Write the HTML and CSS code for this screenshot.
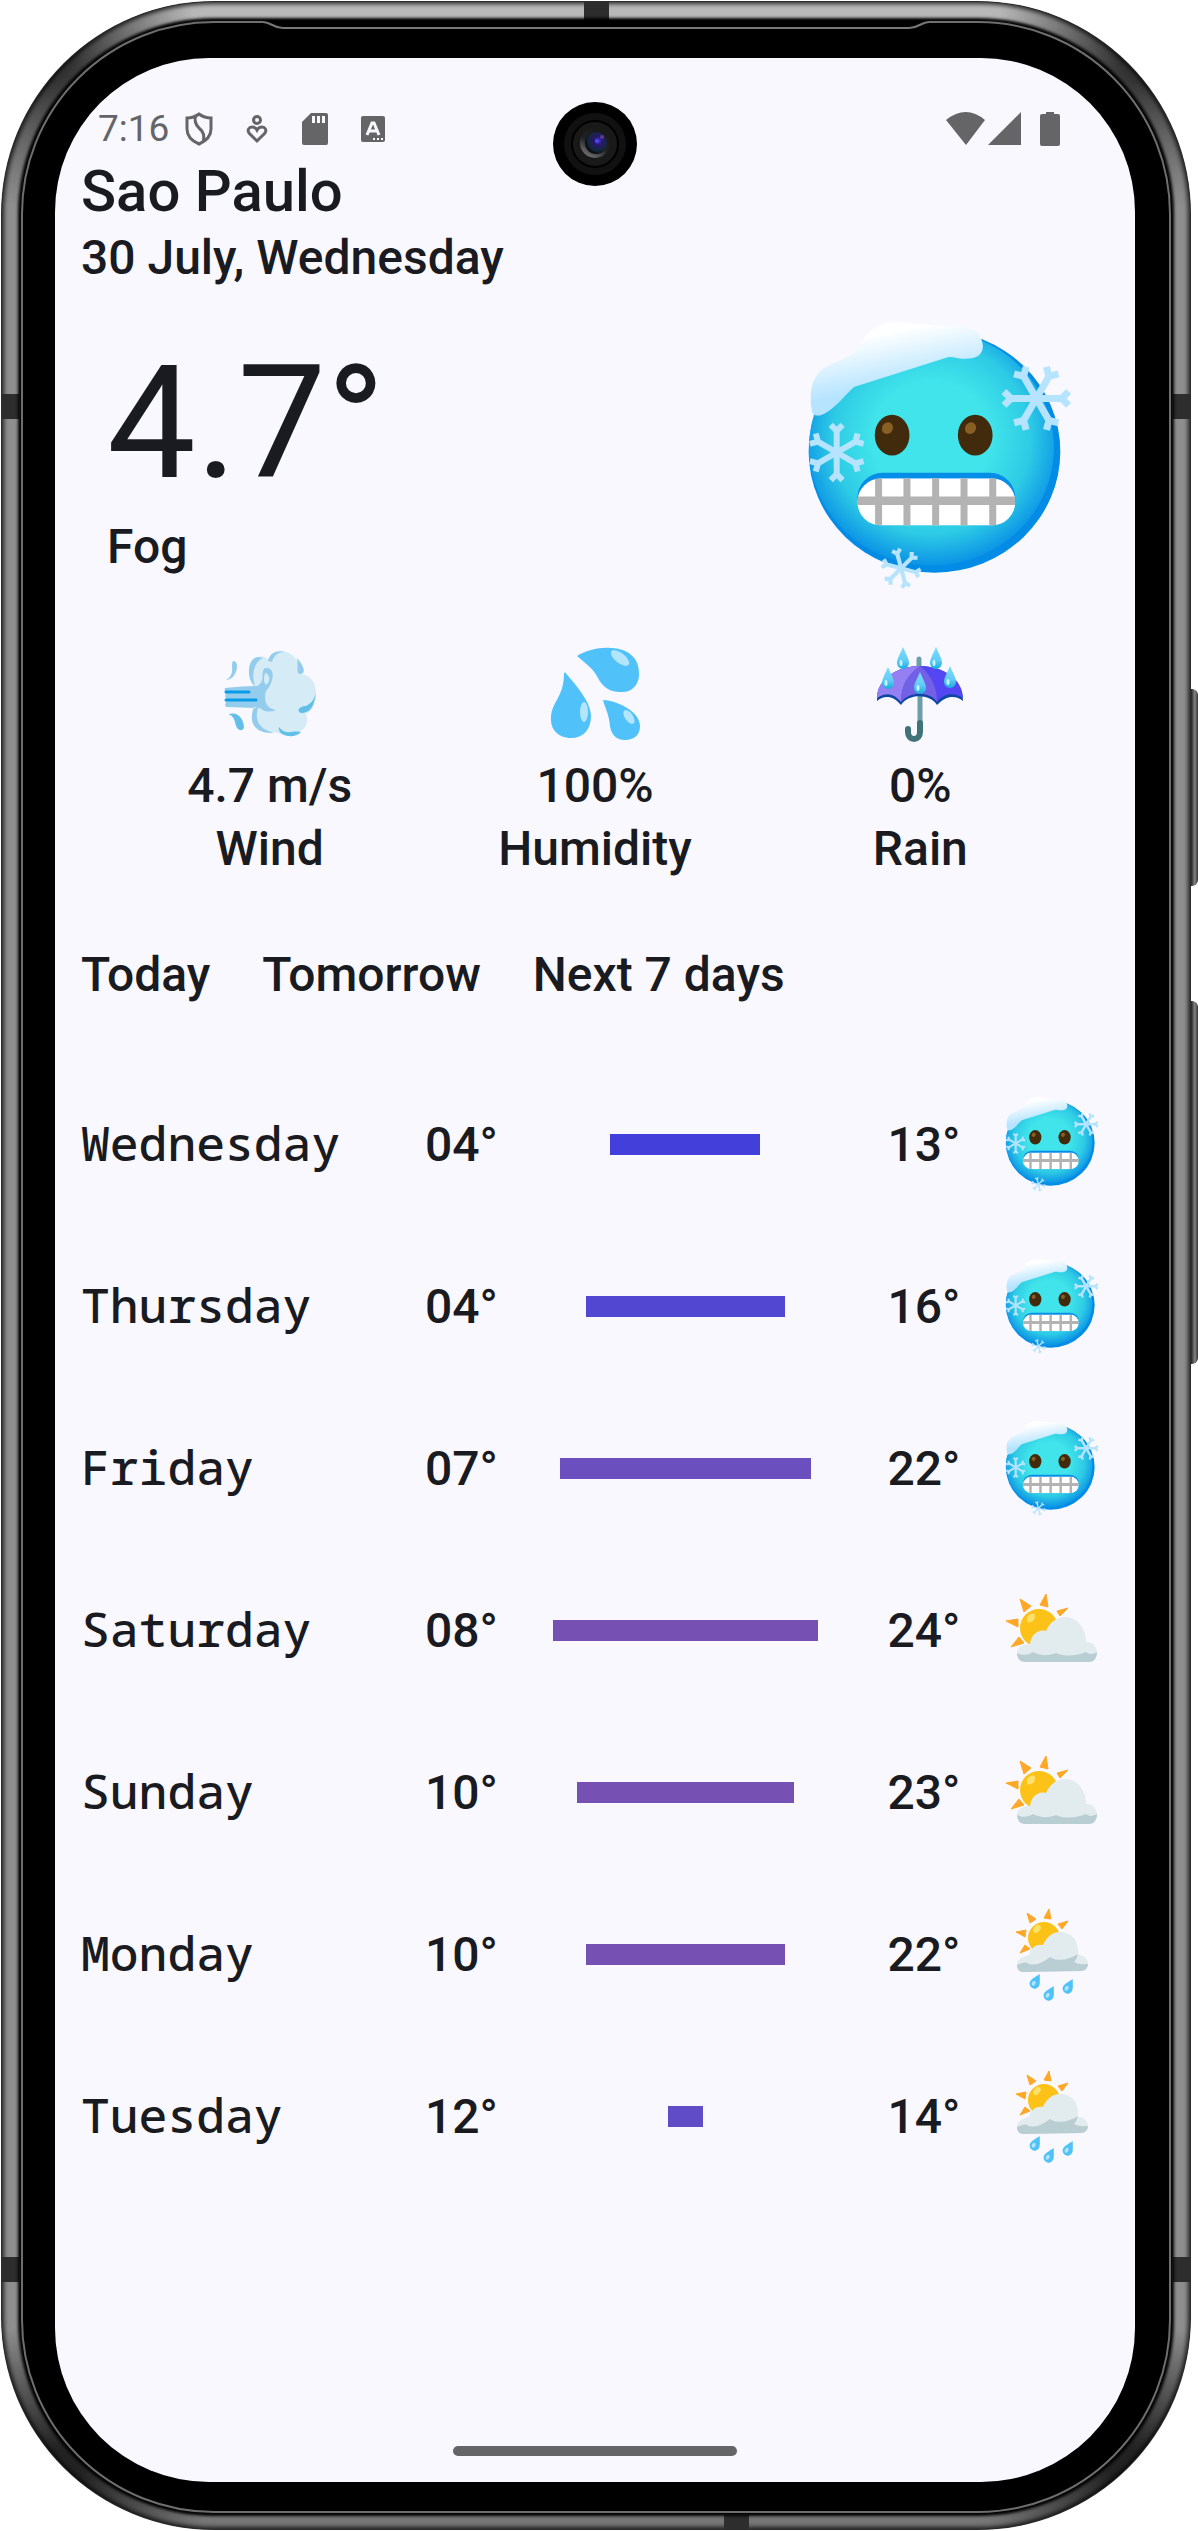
FILE: index.html
```html
<!DOCTYPE html>
<html lang="en">
<head>
<meta charset="utf-8">
<meta name="viewport" content="width=device-width, initial-scale=1">
<title>Weather – Sao Paulo</title>
<link rel="stylesheet" href="styles.css">
</head>
<body>
<svg class="sprite" aria-hidden="true">
  <defs>
    <radialGradient id="ice" cx="0.5" cy="0.46" r="0.54">
      <stop offset="0.45" stop-color="#40e4ea"/>
      <stop offset="0.75" stop-color="#2ecbe5"/>
      <stop offset="1" stop-color="#0b93e6"/>
    </radialGradient>
    <linearGradient id="snow" x1="0.3" y1="0.1" x2="0.5" y2="0.68">
      <stop offset="0.1" stop-color="#fff"/>
      <stop offset="1" stop-color="#b6e4ff"/>
    </linearGradient>
    <linearGradient id="rain" x1="0" y1="0" x2="0" y2="1">
      <stop offset="0" stop-color="#7ddcff"/>
      <stop offset="0.6" stop-color="#62ccf5"/>
      <stop offset="1" stop-color="#16afdb"/>
    </linearGradient>
    <clipPath id="teeth"><rect x="232" y="535" width="473" height="142" rx="72"/></clipPath>
    <g id="arm"><path d="M0 0H84M102-22L80 0L102 22"/></g>
    <g id="flake" fill="none" stroke="#b6e4ff" stroke-width="22" stroke-linejoin="round">
      <use href="#arm"/><use href="#arm" transform="rotate(60)"/><use href="#arm" transform="rotate(120)"/>
      <use href="#arm" transform="rotate(180)"/><use href="#arm" transform="rotate(240)"/><use href="#arm" transform="rotate(300)"/>
    </g>
    <g id="raindrop">
      <path d="M0-11C3-4 6 1 6 5A6 6 0 0 1-6 5C-6 1-3-4 0-11Z" fill="url(#rain)"/>
      <ellipse cx="-2" cy="5" rx="1.500" ry="3" fill="#c9f2ff"/>
    </g>
    <g id="drip" transform="rotate(28)">
      <path d="M0-8C2-4 5 0 5 3A5 5 0 0 1-5 3C-5 0-2-4 0-8Z" fill="#4fc3f7"/>
      <ellipse cx="-1" cy="3" rx="1.800" ry="2.600" fill="#b3e5fc"/>
    </g>
  </defs>
  <symbol id="cold" viewBox="84 64 788 806">
    <ellipse cx="463" cy="455" rx="377" ry="363" fill="#028ce6"/>
    <ellipse cx="454" cy="444" rx="367" ry="353" fill="url(#ice)"/>
    <path d="M95 330C85 250 105 215 160 190C200 175 222 165 240 135C265 90 300 65 350 66C400 70 430 78 490 78L540 78C580 83 605 103 608 138C608 165 590 177 555 177C535 178 525 172 505 172L222 262C190 290 160 335 120 347C103 348 96 345 95 330Z" fill="url(#snow)"/>
    <g fill="#422b0d"><ellipse cx="336" cy="406" rx="52" ry="61"/><ellipse cx="585" cy="406" rx="52" ry="61"/></g>
    <g fill="#896024"><ellipse cx="322" cy="385" rx="16" ry="18" transform="rotate(35 322 385)"/><ellipse cx="571" cy="385" rx="16" ry="18" transform="rotate(35 571 385)"/></g>
    <rect x="232" y="519" width="473" height="150" rx="75" fill="#058de8"/>
    <g clip-path="url(#teeth)">
      <path d="M232 535H705V677H232Z" fill="#fff"/>
      <path d="M285 535h21v142h-21zM370 535h21v142h-21zM456 535h21v142h-21zM541 535h21v142h-21zM627 535h21v142h-21zM232 590h473v25h-473z" fill="#b3b3b3"/>
    </g>
    <use href="#flake" transform="translate(768 296) scale(.95)"/>
    <use href="#flake" transform="translate(170 458) rotate(30) scale(.81)"/>
    <use href="#flake" transform="translate(363 805) rotate(15) scale(.56)"/>
  </symbol>
  <symbol id="partly" viewBox="0 0 94 95">
    <g fill="#ffa726" stroke="#ffa726" stroke-linejoin="round"><path d="M1 38L13 36L13 44ZM15 16L26 23L19 29ZM41 11L43 24L35 22ZM63 25L52 28L55 33ZM6 64L14 54L19 60Z"/></g>
    <circle cx="34" cy="45" r="19" fill="#fdc218"/>
    <ellipse cx="26" cy="35" rx="3.500" ry="5" transform="rotate(38 26 35)" fill="#fee16b"/>
    <path d="M12 70C12 64 18 61 25 61C26 52 33 46 41 48C45 39 52 34 60 34C73 34 81 46 81 59C87 58 92 64 92 69C92 75 89 79 84 79H20C15 79 12 75 12 70Z" fill="#e2ebee"/>
    <path d="M12 70C17 73 24 72 28 69C35 73 44 73 51 70C60 74 72 73 81 69C84 72 89 71 92 69C92 75 89 79 84 79H20C15 79 12 75 12 70Z" fill="#b9ced3"/>
  </symbol>
  <symbol id="showers" viewBox="0 0 94 95">
    <g fill="#ffa726" stroke="#ffa726" stroke-linejoin="round"><path d="M11 25L21 23L20 30ZM22 6L31 12L25 16ZM44 2L46 12L39 11ZM63 14L53 17L57 22ZM15 46L20 38L25 42Z"/></g>
    <circle cx="39" cy="31" r="16" fill="#fdc218"/>
    <ellipse cx="32" cy="22" rx="3" ry="4.500" transform="rotate(38 32 22)" fill="#fee16b"/>
    <path d="M12 58C12 52 18 49 24 48C26 40 32 37 38 38C42 29 48 25 55 25C67 25 74 34 73 48C79 48 83 52 83 57C83 61 80 64 76 64L18 65C14 65 12 62 12 58Z" fill="#e2ebee"/>
    <path d="M12 58C17 56 20 54 24 57C32 59 38 55 45 50C52 55 64 53 73 47C72 51 70 54 69 55C74 58 79 57 83 57C83 61 80 64 76 64L18 65C14 65 12 62 12 58Z" fill="#b9ced3"/>
    <use href="#drip" transform="translate(31 74)"/><use href="#drip" transform="translate(45 86)"/><use href="#drip" transform="translate(64 79)"/>
  </symbol>
</svg>

<div class="phone">
  <span class="side-key side-key-power"></span>
  <span class="side-key side-key-volume"></span>
  <span class="antenna antenna-top"></span><span class="antenna antenna-bottom"></span>
  <span class="antenna antenna-left-high"></span><span class="antenna antenna-right-high"></span>
  <span class="antenna antenna-left-low"></span><span class="antenna antenna-right-low"></span>
  <div class="bezel">
    <div class="earpiece">
      <svg width="20" height="10" viewBox="0 0 20 10"><path d="M0 0H20V8C10 8 10 2 0 2Z" fill="#000"/><path d="M0 2C8 2 10 8 20 8" fill="none" stroke="#777" stroke-width="2"/></svg>
      <span></span>
      <svg width="20" height="10" viewBox="0 0 20 10"><path d="M0 0H20V2C10 2 10 8 0 8Z" fill="#000"/><path d="M20 2C12 2 10 8 0 8" fill="none" stroke="#777" stroke-width="2"/></svg>
    </div>
    <div class="screen">
      <svg class="camera" viewBox="0 0 84 84" aria-hidden="true">
        <defs>
          <radialGradient id="lens" cx="0.6" cy="0.4" r="0.6"><stop offset="0" stop-color="#3c35c8"/><stop offset="0.35" stop-color="#2a1668"/><stop offset="0.75" stop-color="#13293c"/><stop offset="1" stop-color="#0a0a10"/></radialGradient>
          <linearGradient id="rim" x1="0.7" y1="0.2" x2="0.3" y2="0.9"><stop offset="0" stop-color="#1a1a1a"/><stop offset="0.5" stop-color="#222"/><stop offset="1" stop-color="#666"/></linearGradient>
        </defs>
        <circle cx="42" cy="42" r="42" fill="#000"/><circle cx="42" cy="42" r="31" fill="#111"/>
        <circle cx="42" cy="42" r="23" fill="#191919" stroke="#000" stroke-width="2"/>
        <circle cx="42" cy="41" r="15" fill="url(#rim)"/><circle cx="43" cy="41" r="11" fill="url(#lens)"/>
        <circle cx="44" cy="39" r="2" fill="#4a48f0"/><circle cx="49" cy="35" r="2" fill="#5d3b8c"/>
      </svg>
      <header class="status">
        <time class="clock">7:16</time>
        <div class="notices">
          <svg viewBox="0 0 40 40"><path d="M20 5C16 8 12 9 8 9V20C8 27 13 32 20 35C27 32 32 27 32 20V9C28 9 24 8 20 5ZM17 6C15 11 16 15 20 19C25 23 26 27 24 33" fill="none" stroke="#656567" stroke-width="3"/></svg>
          <svg viewBox="0 0 40 40"><g fill="none" stroke="#656567" stroke-width="3"><circle cx="20" cy="11" r="3.500"/><path d="M20 32L12 24C10 21 12 18 15 18C17 18 19 19 20 21C21 19 23 18 25 18C28 18 30 21 28 24Z"/></g></svg>
          <svg viewBox="0 0 40 40"><path d="M16 4H31Q33 4 33 6V34Q33 36 31 36H9Q7 36 7 34V13Z" fill="#656567"/><path d="M17 7h3v7h-3zM22 7h3v7h-3zM27 7h3v7h-3z" fill="#f9f8ff"/></svg>
          <svg viewBox="0 0 40 40"><rect x="8" y="7" width="24" height="26" rx="2" fill="#656567"/><path d="M14 26L19 14H21L26 26M16 22H24" fill="none" stroke="#f9f8ff" stroke-width="3"/><path d="M20 29h2v2h-2zM24 29h2v2h-2zM28 29h2v2h-2z" fill="#f9f8ff"/></svg>
        </div>
        <svg class="signals" viewBox="0 0 114 40" role="img" aria-label="Wi-Fi, signal and battery"><path d="M0 11Q20-5 39 11L20 36ZM75 3V36H42ZM94 7Q94 5 96 5H100V3H108V5H112Q114 5 114 7V35Q114 37 112 37H96Q94 37 94 35Z" fill="#656567"/></svg>
      </header>

      <main class="weather">
        <h1 class="city">Sao Paulo</h1>
        <p class="date">30 July, Wednesday</p>

        <section class="current">
          <div class="reading">
            <p class="temperature">4.7°</p>
            <p class="condition">Fog</p>
          </div>
          <svg class="mood" role="img" aria-label="Freezing"><use href="#cold"/></svg>
        </section>

        <section class="metrics">
          <div class="metric">
            <svg viewBox="0 0 96 96" aria-hidden="true">
              <path d="M33 41C24 34 25 12 36 11C41 9 46 12 48 16C52 4 66 2 74 13C78 18 79 25 78 28C90 28 95 40 94 50C93 60 90 65 84 68C88 80 80 88 68 87C60 90 54 86 52 86C40 90 28 82 34 60Z" fill="#d5ebf5"/>
              <path d="M3 42Q22 40 35 40C44 36 38 26 43 22C50 21 52 27 50 34Q48 41 44 45C42 52 42 62 54 64Q44 68 38 62L4 61Q2 58 5 55Q2 50 4 48Q2 45 3 42ZM33 40C24 34 25 12 36 11L41 12C30 17 30 32 33 40ZM46 15C48 6 56 4 63 6C56 6 52 9 50 16ZM75 12C82 20 84 27 79 28C73 28 77 20 75 12ZM32 61C26 76 32 88 52 87C38 84 32 74 36 62ZM11 15C18 14 16 33 4 34C14 28 8 20 11 15Z" fill="#93ccec"/>
              <path d="M43 27C48 27 49 36 44 39C41 36 42 30 43 27Z" fill="#d5ebf5"/>
              <path d="M94 47C92 58 90 67 79 67C73 64 79 60 84 60C90 57 92 53 94 47ZM57 81C64 90 70 84 79 86C74 93 55 91 57 81ZM6 68C17 65 22 74 22 82C19 87 14 83 13 76C12 72 10 69 6 68Z" fill="#62bfea"/>
              <path d="M4 46H27M4 54H34" stroke="#089be8" stroke-width="3" stroke-linecap="round"/>
            </svg>
            <p>4.7 m/s</p><p>Wind</p>
          </div>
          <div class="metric">
            <svg viewBox="0 0 96 96" aria-hidden="true">
              <g fill="#50c2f9"><path d="M30 10C40 4 52 1 64 2C84 3 93 14 92 30C91 40 84 47 73 46C62 46 55 40 51 32C46 22 38 17 30 10Z"/><path d="M18 26C24 34 44 54 44 70C44 84 36 92 24 92C11 92 3 83 4 71C5 56 17 50 17 28Z"/><path d="M56 54C72 55 93 66 93 80C93 89 87 94 78 94C68 94 64 87 63 80C62 68 58 62 56 54Z"/></g>
              <g fill="#b3e5fc"><ellipse cx="73" cy="12" rx="5" ry="11" transform="rotate(-52 73 12)"/><ellipse cx="37" cy="66" rx="4" ry="10"/><ellipse cx="82" cy="71" rx="4" ry="8" transform="rotate(-35 82 71)"/></g>
            </svg>
            <p>100%</p><p>Humidity</p>
          </div>
          <div class="metric">
            <svg viewBox="0 0 96 96" aria-hidden="true">
              <path d="M47 13V24M48 48V78" stroke="#6d9fa8" stroke-width="5" stroke-linecap="round"/>
              <path d="M48 77V86A6 7 0 0 1 36 86V83" fill="none" stroke="#407378" stroke-width="6" stroke-linecap="round"/>
              <path d="M5 55C5 34 24 20 48 20S91 34 91 55C84 49 74 49 65 59C59 49 38 46 29 59C21 49 12 49 5 55Z" fill="#0d47a1"/>
              <path d="M5 52C5 34 24 20 48 20S91 34 91 52C82 46 72 47 65 56C60 46 38 44 29 56C21 46 12 47 5 52Z" fill="#5546f4"/>
              <path d="M5 52C5 34 24 20 48 20C37 28 29 38 29 56C21 46 12 47 5 52Z" fill="#9580f3"/>
              <path d="M48 20C37 28 29 38 29 56C38 44 60 46 65 56C65 40 58 28 48 20Z" fill="#7261e6"/>
              <use href="#raindrop" x="31" y="12"/><use href="#raindrop" x="64" y="12"/><use href="#raindrop" x="16" y="32"/><use href="#raindrop" x="78" y="31"/><use href="#raindrop" x="48" y="37"/>
            </svg>
            <p>0%</p><p>Rain</p>
          </div>
        </section>

        <nav class="tabs">
          <button type="button">Today</button>
          <button type="button">Tomorrow</button>
          <button type="button">Next 7 days</button>
        </nav>

        <table class="forecast">
          <colgroup><col class="col-day"><col class="col-low"><col class="col-range"><col class="col-high"><col class="col-icon"></colgroup>
          <tbody>
            <tr><th scope="row">Wednesday</th><td>04°</td><td class="range"><div class="bar cold" style="width:150px"></div></td><td>13°</td><td><svg class="icon"><use href="#cold"/></svg></td></tr>
            <tr><th scope="row">Thursday</th><td>04°</td><td class="range"><div class="bar cool" style="width:199px"></div></td><td>16°</td><td><svg class="icon"><use href="#cold"/></svg></td></tr>
            <tr><th scope="row">Friday</th><td>07°</td><td class="range"><div class="bar fair" style="width:251px"></div></td><td>22°</td><td><svg class="icon"><use href="#cold"/></svg></td></tr>
            <tr><th scope="row">Saturday</th><td>08°</td><td class="range"><div class="bar warm" style="width:265px"></div></td><td>24°</td><td><svg class="icon"><use href="#partly"/></svg></td></tr>
            <tr><th scope="row">Sunday</th><td>10°</td><td class="range"><div class="bar warm" style="width:217px"></div></td><td>23°</td><td><svg class="icon"><use href="#partly"/></svg></td></tr>
            <tr><th scope="row">Monday</th><td>10°</td><td class="range"><div class="bar warm" style="width:199px"></div></td><td>22°</td><td><svg class="icon"><use href="#showers"/></svg></td></tr>
            <tr><th scope="row">Tuesday</th><td>12°</td><td class="range"><div class="bar mild" style="width:35px"></div></td><td>14°</td><td><svg class="icon"><use href="#showers"/></svg></td></tr>
          </tbody>
        </table>
      </main>
      <div class="home-bar"></div>
    </div>
  </div>
</div>
</body>
</html>
```
FILE: styles.css
```css
* { box-sizing: border-box; }

body {
  margin: 0;
  background: #fff;
  color: #1a1b20;
  font-family: Roboto, "Liberation Sans", sans-serif;
  font-size: 48px;
  font-weight: 500;
  line-height: 63px;
}

h1, p { margin: 0; }
svg { display: block; }
.sprite { position: absolute; width: 0; height: 0; }

/* Device frame */
.phone {
  position: relative;
  display: flex;
  min-height: calc(100vh - 2px);
  margin: 1px 7px 1px 1px;
  padding: 20px 20px 17px;
  border-radius: 213px;
  background:
    radial-gradient(circle at 50px 60px, #333 20px, transparent 150px),
    radial-gradient(circle at calc(100% - 50px) 60px, #333 20px, transparent 150px),
    radial-gradient(circle at 60px calc(100% - 60px), #222 20px, transparent 150px),
    radial-gradient(circle at calc(100% - 60px) calc(100% - 60px), #222 20px, transparent 150px),
    linear-gradient(#b8b8b8 0, #b8b8b8 20px, #8e8e8e 200px, #8e8e8e calc(100% - 200px), #757575 100%);
  box-shadow: inset 0 0 0 1px #2c2c2c, inset 0 0 4px 3px rgba(0, 0, 0, .75);
}

.bezel {
  position: relative;
  display: flex;
  flex: 1;
  padding: 35px 34px 29px 32px;
  border: 2px solid #6e6e6e;
  border-radius: 193px;
  background: #000;
  box-shadow: 0 0 3px 3px #000;
}

.side-key {
  position: absolute;
  left: 100%;
  width: 7px;
  border-radius: 0 6px 6px 0;
  background: linear-gradient(90deg, #222, #858585 55%, #333);
}
.side-key-power { top: 688px; height: 197px; }
.side-key-volume { top: 1000px; height: 363px; }

.antenna { position: absolute; background: #2d2d2d; }
.antenna-top { top: 0; left: 49%; width: 25px; height: 20px; }
.antenna-bottom { bottom: 0; right: 442px; width: 25px; height: 15px; }
.antenna-left-high, .antenna-left-low { left: 0; width: 18px; height: 25px; }
.antenna-right-high, .antenna-right-low { right: 0; width: 18px; height: 25px; }
.antenna-left-high, .antenna-right-high { top: 393px; }
.antenna-left-low, .antenna-right-low { bottom: 248px; }

.earpiece {
  position: absolute;
  top: -3px;
  left: 240px;
  right: 240px;
  display: flex;
}
.earpiece span { flex: 1; height: 9px; border-bottom: 2px solid #777; background: #000; }

/* Screen */
.screen {
  position: relative;
  display: flex;
  flex: 1;
  flex-direction: column;
  padding-bottom: 26px;
  border-radius: 154px;
  background: #f9f8ff;
}

.camera {
  position: absolute;
  top: 44px;
  left: 50%;
  width: 84px;
  height: 84px;
  margin-left: -42px;
}

.status {
  display: flex;
  align-items: flex-end;
  height: 97px;
  padding: 0 75px 6px 43px;
  color: #656567;
}
.clock { width: 81px; font-size: 37px; font-weight: 400; line-height: 40px; }
.notices { display: flex; gap: 18px; }
.notices svg { width: 40px; height: 40px; }
.signals { width: 114px; height: 40px; margin-left: auto; }

.weather { padding: 0 26px; }
.city { font-size: 58px; font-weight: 500; line-height: 73px; }
.date { line-height: 60px; }

.current {
  display: flex;
  justify-content: space-between;
  padding: 33px 38px 0 26px;
}
.reading { padding-top: 8px; }
.temperature { font-size: 158px; font-weight: 400; line-height: 188px; }
.condition { line-height: 60px; }
.mood { width: 263px; height: 269px; }

.metrics {
  display: grid;
  grid-template-columns: repeat(3, 1fr);
  padding: 56px 26px 0;
  text-align: center;
}
.metric svg { width: 96px; height: 96px; margin: 0 auto 12px; }

.tabs { display: flex; gap: 52px; padding-top: 63px; }
.tabs button {
  padding: 0;
  border: 0;
  background: none;
  color: inherit;
  font: inherit;
}

/* Weekly forecast */
.forecast {
  width: 100%;
  margin-top: 57px;
  border-collapse: collapse;
  table-layout: fixed;
}
.forecast tr { height: 162px; }
.forecast th, .forecast td { padding: 0; white-space: nowrap; text-align: center; }
.forecast th { padding-bottom: 4px; font-family: "Noto Sans Mono", "DejaVu Sans Mono", monospace; font-weight: 500; text-align: left; }
.forecast .range { padding-right: 5px; }
.col-day { width: 33%; }
.col-low { width: 8%; }
.col-range { width: 36%; }
.col-high { width: 10%; }
.col-icon { width: 13%; }

.bar { max-width: 100%; height: 21px; margin: 0 auto; }
.bar.cold { background: #433fdb; }
.bar.cool { background: #5147d1; }
.bar.mild { background: #604cc6; }
.bar.fair { background: #6b4fbe; }
.bar.warm { background: #7650b3; }

.icon { width: 94px; height: 95px; margin: 0 10px 0 auto; }

.home-bar {
  width: 284px;
  height: 10px;
  margin: auto auto 0;
  border-radius: 5px;
  background: #656567;
}
```
